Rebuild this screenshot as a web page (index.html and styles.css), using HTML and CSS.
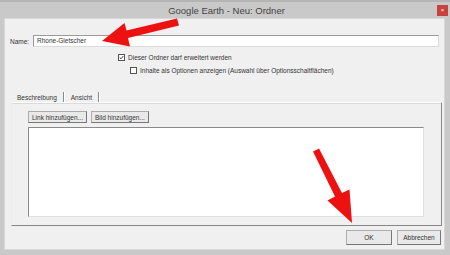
FILE: index.html
```html
<!DOCTYPE html>
<html lang="de">
<head>
  <meta charset="UTF-8">
  <title>Google Earth - Neu: Ordner</title>
  <link rel="stylesheet" href="styles.css">
</head>
<body>
  <div class="window">
    <div class="titlebar">
      <span></span>
      <span class="title">Google Earth - Neu: Ordner</span>
      <span class="close">&times;</span>
    </div>
    <div class="client">
      <div class="name-row">
        <label for="name">Name:</label>
        <div class="input" id="name">Rhone-Gletscher</div>
      </div>
      <div class="check-row first">
        <span class="box checked"><svg viewBox="0 0 7 7"><path d="M1 3.5 L2.8 5.3 L6 1.5" fill="none" stroke="#222" stroke-width="1.2"/></svg></span>
        <span>Dieser Ordner darf erweitert werden</span>
      </div>
      <div class="check-row second">
        <span class="box"></span>
        <span>Inhalte als Optionen anzeigen (Auswahl über Optionsschaltflächen)</span>
      </div>
      <div class="tabs">
        <span class="tab">Beschreibung</span>
        <span class="sep"></span>
        <span class="tab">Ansicht</span>
        <span class="sep"></span>
      </div>
      <div class="panel">
        <div class="panel-buttons">
          <button class="btn">Link hinzufügen...</button>
          <button class="btn">Bild hinzufügen...</button>
        </div>
        <div class="textarea"></div>
      </div>
      <div class="footer">
        <button class="btn ok">OK</button>
        <button class="btn cancel">Abbrechen</button>
      </div>
    </div>
    <svg class="arrows" viewBox="0 0 450 255">
      <polygon fill="#ee1111" points="179,23.5 177,16.5 126.5,28.5 124.5,21 102,39 130,44.5 128,36"/>
      <polygon fill="#ee1111" points="313,149.5 319,146.5 342,191 349.5,187.5 352,221 327.5,198.5 335,194.5"/>
    </svg>
  </div>
</body>
</html>
```

FILE: styles.css
```css
*{margin:0;padding:0;box-sizing:border-box;}
body{width:450px;height:255px;overflow:hidden;background:#c6c6c6;font-family:'Liberation Sans',Arial,sans-serif;}
.window{position:relative;width:450px;height:255px;display:flex;flex-direction:column;padding:0 5px 5px 4px;background:#c9c9c9;border-top:2px solid #b4b4b4;}
.titlebar{height:16px;display:grid;grid-template-columns:1fr auto 1fr;align-items:center;}
.title{font-size:9.5px;color:#444;padding-left:4px;}
.close{justify-self:end;width:11px;height:11px;margin-right:-3px;margin-top:1px;background:#c9413d;color:#fff;font-size:6px;line-height:11px;text-align:center;}
.client{flex:1;background:#f0f0f0;border:1px solid #d8d8d8;padding:16px 5px 0 5px;display:flex;flex-direction:column;font-size:6.5px;color:#333;}
.name-row{display:flex;align-items:center;gap:4px;}
.name-row label{width:19px;}
.input{flex:1;height:12px;background:#fff;border:1px solid #9a9a9a;border-right-color:#dcdcdc;border-bottom-color:#dcdcdc;padding-left:3px;line-height:10px;}
.check-row{display:flex;align-items:center;gap:3px;height:8px;}
.check-row.first{margin:6px 0 0 108px;}
.check-row.second{margin:5px 0 0 120px;}
.box{width:7px;height:7px;border:1px solid #555;background:#fff;display:flex;}
.box svg{width:5px;height:5px;}
.tabs{display:flex;align-items:center;margin:18px 0 0 7px;height:10px;}
.tab{padding:0 6px 0 0;}
.sep{width:1px;height:11px;background:#8a8a8a;border-right:1px solid #fff;margin-right:6px;box-sizing:content-box;}
.panel{margin:0 -3px 0 1px;border-top:1px solid #fff;border-right:1px solid #888;border-bottom:1px solid #888;border-left:1px solid #ececec;box-shadow:inset 0 1px 0 #dadada;height:124px;padding:8px 17px 0 16px;display:flex;flex-direction:column;}
.panel-buttons{display:flex;gap:4px;}
.btn{font-family:inherit;font-size:6.5px;color:#333;height:12px;padding:0 3px;background:#e9e9e9;border:1px solid #acacac;border-right-color:#777;border-bottom-color:#777;}
.textarea{margin-top:4px;height:90px;background:#fff;border:1px solid #8a8a8a;border-right-color:#e0e0e0;border-bottom-color:#e0e0e0;}
.footer{display:flex;justify-content:flex-end;gap:5px;margin:4px -2px 0 0;}
.footer .btn{height:15px;}
.ok{width:46px;}
.cancel{width:44px;}
.arrows{position:absolute;left:0;top:0;width:450px;height:255px;pointer-events:none;}
```
